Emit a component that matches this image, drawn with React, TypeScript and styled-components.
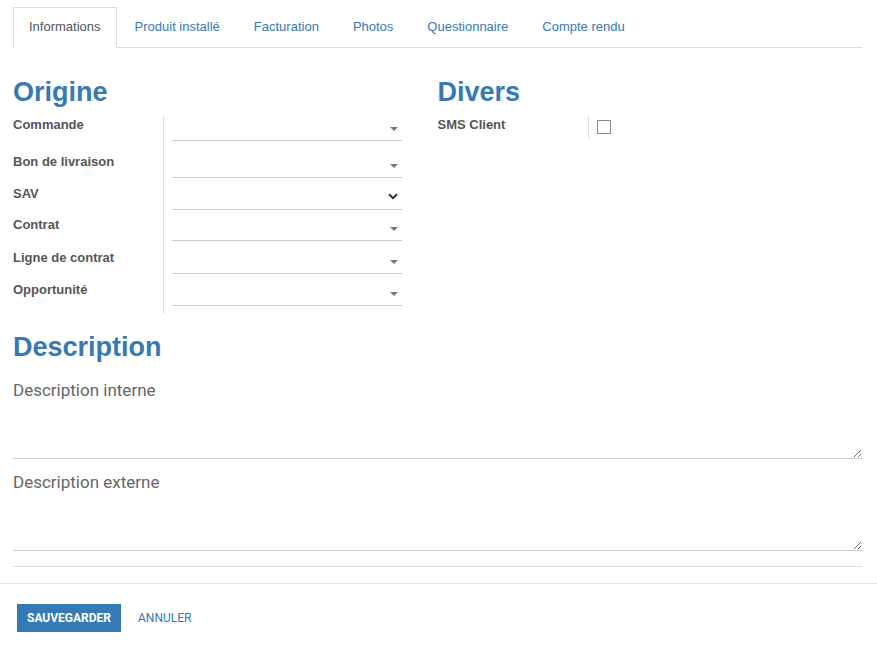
import styled, { createGlobalStyle, css } from 'styled-components'

const GlobalStyle = createGlobalStyle`
    body {
        margin: 0;
        background: #fff;
        font-family: "Liberation Sans", Arial, sans-serif;
    }
    * { box-sizing: border-box; }
`

const Page = styled.div`
    width: 877px;
    min-height: 650px;
    background: #fff;
`

const Sheet = styled.div`
    padding: 7px 15px 0 13px;
`

const TabBar = styled.ul`
    display: flex;
    list-style: none;
    margin: 0;
    padding: 0;
    border-bottom: 1px solid #ddd;
`

interface tabProps {
    active?: boolean
}

const Tab = styled.li`
    height: 41px;
    margin: 0 2px -1px 0;
    padding: 0 16px 3px;
    display: flex;
    align-items: center;
    font-size: 13px;
    color: #337ab7;
    cursor: pointer;
    ${(props: tabProps) => props.active && css`
        padding: 0 15px 3px;
        color: #555;
        background: #fff;
        border: 1px solid #ddd;
        border-bottom-color: #fff;
    `}
`

const Columns = styled.div`
    display: grid;
    grid-template-columns: 1fr 1fr;
    margin-top: 29px;
`

const Group = styled.div`
    padding-right: 36px;
`

const Heading = styled.h2`
    margin: 0 0 9px;
    font-size: 27px;
    line-height: 30px;
    font-weight: bold;
    color: #337ab7;
`

interface rowProps {
    h: number
}

const Row = styled.div`
    display: grid;
    grid-template-columns: 150px 1fr;
    height: ${(props: rowProps) => props.h}px;
`

const Label = styled.div`
    padding-top: 1px;
    font-size: 13px;
    line-height: 16px;
    font-weight: bold;
    color: #555;
`

const Cell = styled.div`
    border-left: 1px solid #ddd;
    padding-left: 8px;
`

const Select = styled.div`
    position: relative;
    height: 25px;
    border-bottom: 1px solid #ccc;
`

const Caret = styled.span`
    position: absolute;
    right: 4px;
    top: 11px;
    width: 0;
    height: 0;
    border-left: 4px solid transparent;
    border-right: 4px solid transparent;
    border-top: 4px solid #777;
`

const Chevron = styled.svg`
    position: absolute;
    right: 4px;
    top: 8px;
`

const Checkbox = styled.span`
    display: block;
    margin-top: 4px;
    width: 14px;
    height: 14px;
    border: 1px solid #888;
    background: #fff;
`

const Section = styled.div`
    margin-top: 18px;
`

const DescHeading = styled(Heading)`
    margin-bottom: 13px;
`

const Area = styled.textarea`
    display: block;
    width: 100%;
    height: 84px;
    margin: 0 0 8px;
    padding: 5px 0 0;
    border: none;
    border-bottom: 1px solid #ccc;
    outline: none;
    resize: vertical;
    font-family: Roboto, "Liberation Sans", sans-serif;
    font-size: 17px;
    line-height: 20px;
    color: #555;
    &::placeholder { color: #666; }
`

const Separator = styled.div`
    margin-top: 15px;
    border-top: 1px solid #ddd;
`

const Footer = styled.div`
    margin-top: 16px;
    border-top: 1px solid #e5e5e5;
    padding: 20px 17px;
    display: flex;
    align-items: center;
    gap: 7px;
`

interface buttonProps {
    primary?: boolean
}

const Button = styled.button`
    height: 28px;
    padding: 0 10px;
    border: none;
    background: ${(props: buttonProps) => props.primary ? "#337ab7" : "transparent"};
    color: ${(props: buttonProps) => props.primary ? "#fff" : "#337ab7"};
    font-family: Roboto, "Liberation Sans", sans-serif;
    font-size: 12px;
    font-weight: ${(props: buttonProps) => props.primary ? 700 : 400};
    text-transform: uppercase;
    cursor: pointer;
`

const tabs = ["Informations", "Produit installé", "Facturation", "Photos", "Questionnaire", "Compte rendu"]

const origine = [
    { label: "Commande", h: 37 },
    { label: "Bon de livraison", h: 32 },
    { label: "SAV", h: 31, open: true },
    { label: "Contrat", h: 33 },
    { label: "Ligne de contrat", h: 32 },
    { label: "Opportunité", h: 33 },
]

export default function App() {
    return (
        <Page>
            <GlobalStyle />
            <Sheet>
                <TabBar>
                    {tabs.map((t, i) => <Tab key={t} active={i === 0}>{t}</Tab>)}
                </TabBar>

                <Columns>
                    <Group>
                        <Heading>Origine</Heading>
                        {origine.map(f => (
                            <Row key={f.label} h={f.h}>
                                <Label>{f.label}</Label>
                                <Cell>
                                    <Select>
                                        {f.open ? (
                                            <Chevron width="10" height="7" viewBox="0 0 10 7">
                                                <path d="M1 1.2 L5 5.2 L9 1.2" fill="none" stroke="#222" strokeWidth="1.8" />
                                            </Chevron>
                                        ) : <Caret />}
                                    </Select>
                                </Cell>
                            </Row>
                        ))}
                    </Group>
                    <Group>
                        <Heading>Divers</Heading>
                        <Row h={23}>
                            <Label>SMS Client</Label>
                            <Cell>
                                <Checkbox />
                            </Cell>
                        </Row>
                    </Group>
                </Columns>

                <Section>
                    <DescHeading>Description</DescHeading>
                    <Area placeholder="Description interne" />
                    <Area placeholder="Description externe" />
                    <Separator />
                </Section>
            </Sheet>
            <Footer>
                <Button primary>Sauvegarder</Button>
                <Button>Annuler</Button>
            </Footer>
        </Page>
    )
}
